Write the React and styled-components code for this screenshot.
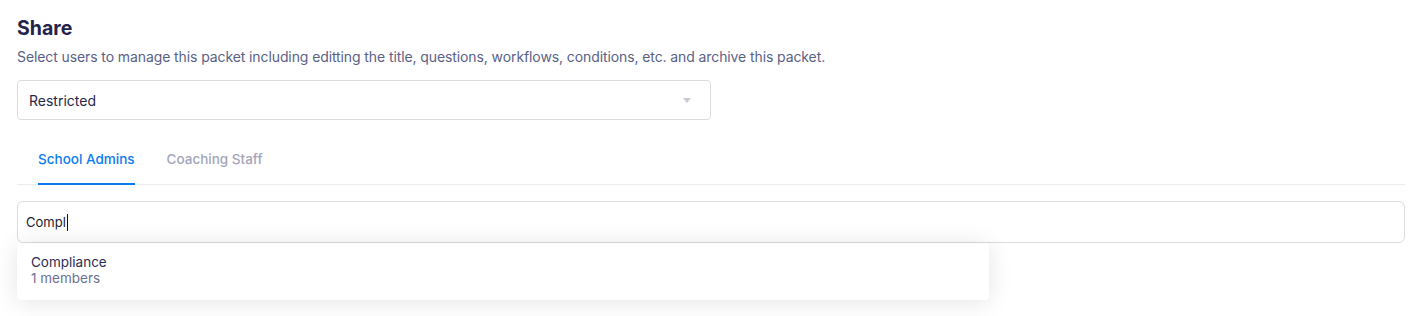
import styled, { createGlobalStyle } from "styled-components";

const GlobalStyle = createGlobalStyle`
  body {
    margin: 0;
    background: #fff;
    font-family: Inter, "Noto Sans", sans-serif;
  }
`;

const Page = styled.div`
  padding: 16px 15px 20px 17px;
`;

const Title = styled.h2`
  margin: 0;
  font-size: 19.5px;
  line-height: 24px;
  font-weight: 700;
  color: #23244b;
`;

const Hint = styled.p`
  margin: 8px 0 0;
  font-size: 14px;
  line-height: 17px;
  letter-spacing: -0.1px;
  color: #5a5f87;
`;

const Select = styled.div`
  margin-top: 15px;
  width: 694px;
  height: 40px;
  box-sizing: border-box;
  border: 1px solid #dcdce0;
  border-radius: 4px;
  display: flex;
  align-items: center;
  padding: 0 11px;
  font-size: 14px;
  color: #262848;
`;

const Caret = styled.span`
  margin-left: auto;
  margin-right: 8px;
  width: 0;
  height: 0;
  border-left: 4px solid transparent;
  border-right: 4px solid transparent;
  border-top: 5px solid #c9c9d3;
`;

const Tabs = styled.div`
  margin-top: 20px;
  display: flex;
  gap: 32px;
  padding-left: 21px;
  border-bottom: 1px solid #ececf0;
`;

const Tab = styled.div`
  padding: 11px 0 18px;
  font-size: 13.5px;
  line-height: 16px;
  font-weight: 500;
  color: ${(p) => (p.active ? "#0b7bef" : "#a3a5ba")};
  box-shadow: ${(p) => (p.active ? "inset 0 -2px 0 #0b7bef" : "none")};
  margin-bottom: -1px;
`;

const Search = styled.div`
  margin-top: 16px;
  height: 42px;
  box-sizing: border-box;
  border: 1px solid #dcdce0;
  border-radius: 6px;
  display: flex;
  align-items: center;
  padding: 0 8px;
  font-size: 13px;
  color: #1c1c2c;
`;

const Cursor = styled.span`
  display: inline-block;
  width: 1px;
  height: 17px;
  background: #111;
  margin-left: 1px;
`;

const Menu = styled.div`
  width: 972px;
  box-sizing: border-box;
  background: #fff;
  border-radius: 4px;
  padding: 11px 14px 14px;
  box-shadow: 0 2px 24px rgba(0, 0, 0, 0.11);
`;

const Option = styled.div`
  font-size: 13.5px;
  line-height: 16px;
`;

const OptionName = styled.div`
  color: #2b2d53;
`;

const OptionMeta = styled.div`
  color: #6b6f94;
`;

export default function App() {
  return (
    <>
      <GlobalStyle />
      <Page>
        <Title>Share</Title>
        <Hint>
          Select users to manage this packet including editting the title,
          questions, workflows, conditions, etc. and archive this packet.
        </Hint>
        <Select>
          Restricted
          <Caret />
        </Select>
        <Tabs>
          <Tab active>School Admins</Tab>
          <Tab>Coaching Staff</Tab>
        </Tabs>
        <Search>
          Compl
          <Cursor />
        </Search>
        <Menu>
          <Option>
            <OptionName>Compliance</OptionName>
            <OptionMeta>1 members</OptionMeta>
          </Option>
        </Menu>
      </Page>
    </>
  );
}
